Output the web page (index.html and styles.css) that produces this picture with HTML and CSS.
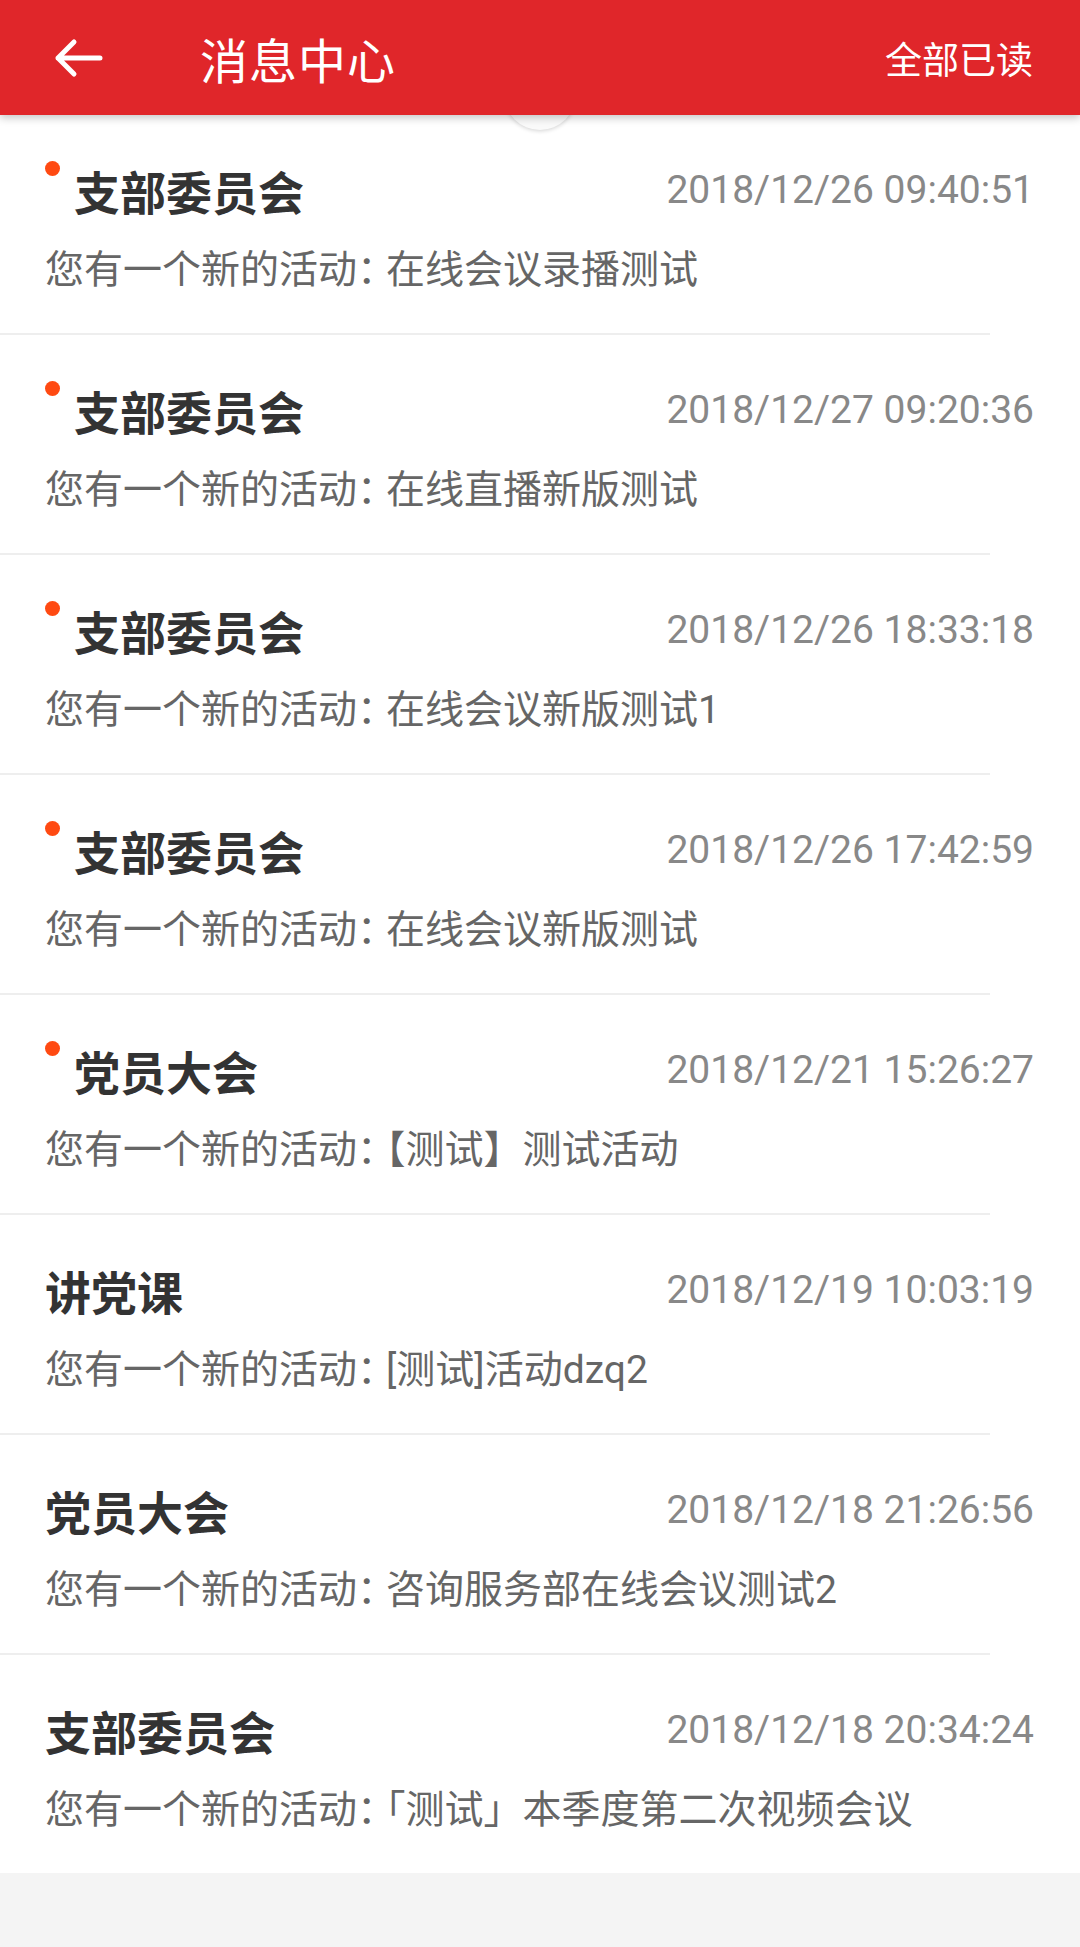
FILE: index.html
```html
<!DOCTYPE html>
<html lang="zh-CN">
<head>
    <meta charset="UTF-8">
    <meta name="viewport" content="width=device-width, initial-scale=1.0">
    <title>消息中心</title>
    <link rel="stylesheet" href="styles.css">
</head>
<body>
    <header class="topbar">
        <div class="back">
            <svg viewBox="0 0 50 40" width="50" height="40">
                <path d="M47 20H5M21 4L5 20l16 16" fill="none" stroke="#fff" stroke-width="5" stroke-linecap="round" stroke-linejoin="round"/>
            </svg>
        </div>
        <h1 class="title">消息中心</h1>
        <a class="read-all" href="#">全部已读</a>
    </header>
    <div class="refresh"></div>

    <ul class="messages">
        <li class="item unread">
            <div class="row"><span class="name">支部委员会</span><span class="time">2018/12/26 09:40:51</span></div>
            <p class="desc">您有一个新的活动<span class="colon">：</span>在线会议录播测试</p>
        </li>
        <li class="item unread">
            <div class="row"><span class="name">支部委员会</span><span class="time">2018/12/27 09:20:36</span></div>
            <p class="desc">您有一个新的活动<span class="colon">：</span>在线直播新版测试</p>
        </li>
        <li class="item unread">
            <div class="row"><span class="name">支部委员会</span><span class="time">2018/12/26 18:33:18</span></div>
            <p class="desc">您有一个新的活动<span class="colon">：</span>在线会议新版测试1</p>
        </li>
        <li class="item unread">
            <div class="row"><span class="name">支部委员会</span><span class="time">2018/12/26 17:42:59</span></div>
            <p class="desc">您有一个新的活动<span class="colon">：</span>在线会议新版测试</p>
        </li>
        <li class="item unread">
            <div class="row"><span class="name">党员大会</span><span class="time">2018/12/21 15:26:27</span></div>
            <p class="desc">您有一个新的活动<span class="colon">：</span>【测试】测试活动</p>
        </li>
        <li class="item">
            <div class="row"><span class="name">讲党课</span><span class="time">2018/12/19 10:03:19</span></div>
            <p class="desc">您有一个新的活动<span class="colon">：</span>[测试]活动dzq2</p>
        </li>
        <li class="item">
            <div class="row"><span class="name">党员大会</span><span class="time">2018/12/18 21:26:56</span></div>
            <p class="desc">您有一个新的活动<span class="colon">：</span>咨询服务部在线会议测试2</p>
        </li>
        <li class="item last">
            <div class="row"><span class="name">支部委员会</span><span class="time">2018/12/18 20:34:24</span></div>
            <p class="desc">您有一个新的活动<span class="colon">：</span>「测试」本季度第二次视频会议</p>
        </li>
    </ul>
</body>
</html>
```

FILE: styles.css
```css
body {
    margin: 0;
    font-family: Roboto, "Noto Sans CJK SC", sans-serif;
    background-color: #f4f4f4;
    min-height: 1947px;
}
.topbar {
    position: relative;
    z-index: 2;
    height: 115px;
    background-color: #e0262a;
    display: flex;
    align-items: center;
    padding: 0 47px 0 53px;
    box-shadow: 0 3px 8px rgba(0, 0, 0, 0.22);
}
.back {
    width: 50px;
    height: 40px;
    display: flex;
}
.title {
    margin: 0 0 0 97px;
    flex: 1;
    color: white;
    font-size: 48px;
    font-weight: normal;
    letter-spacing: 1px;
}
.read-all {
    color: white;
    text-decoration: none;
    font-size: 37px;
}

/* pull to refresh circle peeking under the bar */
.refresh {
    position: absolute;
    z-index: 1;
    top: 58px;
    left: 504px;
    width: 72px;
    height: 72px;
    border-radius: 50%;
    background-color: #fafafa;
    box-shadow: 0 1px 4px rgba(0, 0, 0, 0.18);
}

.messages {
    list-style: none;
    margin: 0;
    padding: 0;
}
.item {
    height: 220px;
    box-sizing: border-box;
    padding: 45px 46px 0 45px;
    background: linear-gradient(#eeeeee, #eeeeee) no-repeat left bottom / 990px 2px, #ffffff;
}
.item.last {
    background: #ffffff;
    height: 218px;
}
.row {
    display: flex;
    justify-content: space-between;
    align-items: center;
    height: 60px;
}
.name {
    position: relative;
    font-family: "Noto Sans CJK SC", sans-serif;
    font-size: 46px;
    font-weight: bold;
    color: #333333;
}
.unread .name {
    padding-left: 29px;
}
.unread .name::before {
    content: "";
    position: absolute;
    left: 0;
    top: 4px;
    width: 15px;
    height: 15px;
    border-radius: 50%;
    background-color: #ff4a12;
}
.time {
    font-size: 39px;
    color: #888888;
}
.desc {
    margin: 25px 0 0;
    line-height: 50px;
    font-size: 39px;
    color: #666666;
}
.colon {
    letter-spacing: -10px;
}
```
